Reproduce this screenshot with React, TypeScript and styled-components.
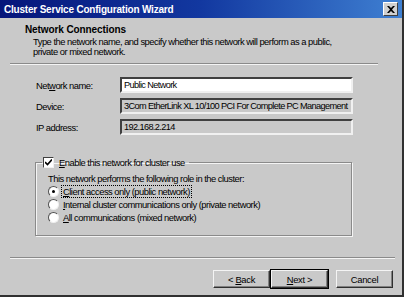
import styled, { createGlobalStyle } from "styled-components";

const GlobalStyle = createGlobalStyle`
  html, body {
    margin: 0;
    padding: 0;
    background: #c9c9c9;
  }
  body {
    font-family: "Liberation Sans", Arial, sans-serif;
    font-size: 9.4px;
    letter-spacing: -0.5px;
    color: #000;
  }
`;

const fields = [
  { label: "Net", key: "w", rest: "ork name:", value: "Public Network", enabled: true },
  { label: "Device:", value: "3Com EtherLink XL 10/100 PCI For Complete PC Management", enabled: false },
  { label: "IP address:", value: "192.168.2.214", enabled: false },
];

const roles = [
  { hot: "C", rest: "lient access only (public network)", checked: true },
  { hot: "I", rest: "nternal cluster communications only (private network)", checked: false },
  { hot: "A", rest: "ll communications (mixed network)", checked: false },
];

const App = () => {
  return (
    <>
      <GlobalStyle />
      <Window>
        <TitleBar>
          <Caption>Cluster Service Configuration Wizard</Caption>
          <CloseButton>
            <svg width="8" height="7" viewBox="0 0 8 7">
              <path d="M0 0 L2 0 L4 2 L6 0 L8 0 L5 3.5 L8 7 L6 7 L4 5 L2 7 L0 7 L3 3.5 Z" fill="#000" />
            </svg>
          </CloseButton>
        </TitleBar>
        <Header>
          <HeaderTitle>Network Connections</HeaderTitle>
          <HeaderDesc>
            Type the network name, and specify whether this network will perform as a public,
            <br />
            private or mixed network.
          </HeaderDesc>
        </Header>
        <Separator $width={368} />
        <Body>
          <Form>
            {fields.map((f) => (
              <FieldRow key={f.label}>
                <Label>
                  {f.key ? (
                    <>
                      {f.label}
                      <u>{f.key}</u>
                      {f.rest}
                    </>
                  ) : (
                    f.label
                  )}
                </Label>
                <TextBox $enabled={f.enabled}>{f.value}</TextBox>
              </FieldRow>
            ))}
          </Form>
          <GroupBox>
            <Legend>
              <CheckBox>
                <svg width="7" height="7" viewBox="0 0 7 7">
                  <path d="M0 3 L2.5 5.5 L7 0.5" stroke="#000" strokeWidth="1.6" fill="none" />
                </svg>
              </CheckBox>
              <span>
                <u>E</u>nable this network for cluster use
              </span>
            </Legend>
            <GroupText>This network performs the following role in the cluster:</GroupText>
            <RadioList>
              {roles.map((r) => (
                <RadioRow key={r.hot}>
                  <Radio>{r.checked && <RadioDot />}</Radio>
                  <RadioLabel $focused={r.checked}>
                    <u>{r.hot}</u>
                    {r.rest}
                  </RadioLabel>
                </RadioRow>
              ))}
            </RadioList>
          </GroupBox>
        </Body>
        <Separator $width={385} />
        <ButtonRow>
          <Button>
            <span>
              &lt; <u>B</u>ack
            </span>
          </Button>
          <Button $default>
            <span>
              <u>N</u>ext &gt;
            </span>
          </Button>
          <Spacer />
          <Button>Cancel</Button>
        </ButtonRow>
      </Window>
    </>
  );
};

export default App;

const Window = styled.div`
  width: 404px;
  height: 297px;
  box-sizing: border-box;
  background: #c9c9c9;
  border-right: 2px solid #303030;
  border-bottom: 2px solid #303030;
  display: flex;
  flex-direction: column;
  overflow: hidden;
`;

const TitleBar = styled.div`
  height: 18px;
  flex: 0 0 18px;
  background-color: #0a246a;
  background-image: linear-gradient(90deg, #06157a 0%, #1238a0 50%, #3f80d2 100%);
  display: flex;
  align-items: center;
  justify-content: space-between;
  padding: 0 4px 0 4px;
`;

const Caption = styled.span`
  color: #ffffff;
  font-weight: 700;
  font-size: 10px;
  letter-spacing: -0.2px;
`;

const CloseButton = styled.div`
  width: 13px;
  height: 12px;
  background: #d0d0d0;
  border: 1px solid;
  border-color: #fff #404040 #404040 #fff;
  display: flex;
  align-items: center;
  justify-content: center;
`;

const Header = styled.div`
  padding: 6px 0 0 25px;
  height: 39px;
`;

const HeaderTitle = styled.div`
  font-weight: 700;
  font-size: 10px;
  letter-spacing: -0.1px;
  line-height: 12px;
`;

const HeaderDesc = styled.div`
  padding-left: 8px;
  margin-top: 1px;
  line-height: 10px;
`;

const Separator = styled.div<{ $width: number }>`
  width: ${(p) => p.$width}px;
  margin-left: 10px;
  border-top: 1px solid #8a8a8a;
  border-bottom: 1px solid #f4f4f4;
`;

const Body = styled.div`
  height: 192px;
  padding: 12px 0 0 35px;
  box-sizing: border-box;
`;

const Form = styled.div`
  display: flex;
  flex-direction: column;
  gap: 5px;
`;

const FieldRow = styled.div`
  display: flex;
  align-items: center;
`;

const Label = styled.div`
  width: 84px;
  padding-left: 1px;
`;

const TextBox = styled.div<{ $enabled: boolean }>`
  width: 233px;
  height: 16px;
  box-sizing: border-box;
  border: 2px solid;
  border-color: #404040 #f0f0f0 #f0f0f0 #404040;
  background: ${(p) => (p.$enabled ? "#fff" : "#c9c9c9")};
  padding: 0 1px 0 2px;
  font-size: 9.2px;
  letter-spacing: -0.62px;
  line-height: 12px;
  white-space: nowrap;
  overflow: hidden;
`;

const GroupBox = styled.fieldset`
  margin: 22px 0 0 0;
  width: 317px;
  height: 79px;
  box-sizing: border-box;
  border: 1px solid #8a8a8a;
  box-shadow: 1px 1px 0 #f4f4f4, inset 1px 1px 0 #f4f4f4;
  padding: 5px 0 0 12px;
`;

const Legend = styled.legend`
  display: flex;
  align-items: center;
  gap: 5px;
  padding: 0 4px 0 1px;
  margin-left: -6px;
`;

const CheckBox = styled.span`
  width: 9px;
  height: 9px;
  background: #fff;
  border: 1px solid;
  border-color: #404040 #f0f0f0 #f0f0f0 #404040;
  display: flex;
  align-items: center;
  justify-content: center;
`;

const GroupText = styled.div`
  line-height: 11px;
`;

const RadioList = styled.div`
  display: flex;
  flex-direction: column;
  margin-top: 1px;
`;

const RadioRow = styled.div`
  display: flex;
  align-items: center;
  gap: 3px;
  height: 13px;
`;

const Radio = styled.span`
  width: 9px;
  height: 9px;
  border-radius: 50%;
  background: #fff;
  border: 1px solid;
  border-color: #505050 #f0f0f0 #f0f0f0 #505050;
  display: flex;
  align-items: center;
  justify-content: center;
`;

const RadioDot = styled.span`
  width: 3px;
  height: 3px;
  border-radius: 50%;
  background: #000;
`;

const RadioLabel = styled.span<{ $focused: boolean }>`
  padding: 0 1px;
  outline: ${(p) => (p.$focused ? "1px dotted #000" : "none")};
`;

const ButtonRow = styled.div`
  display: flex;
  padding: 11px 9px 0 213px;
`;

const Spacer = styled.div`
  width: 8px;
`;

const Button = styled.div<{ $default?: boolean }>`
  width: 57px;
  height: 18px;
  box-sizing: border-box;
  display: flex;
  align-items: center;
  justify-content: center;
  letter-spacing: -0.3px;
  background: #c9c9c9;
  border: 1px solid;
  border-color: #f4f4f4 #303030 #303030 #f4f4f4;
  box-shadow: ${(p) => (p.$default ? "0 0 0 1px #000, inset -1px -1px 0 #808080" : "inset -1px -1px 0 #808080")};
  margin-left: ${(p) => (p.$default ? "1px" : "0")};
`;
